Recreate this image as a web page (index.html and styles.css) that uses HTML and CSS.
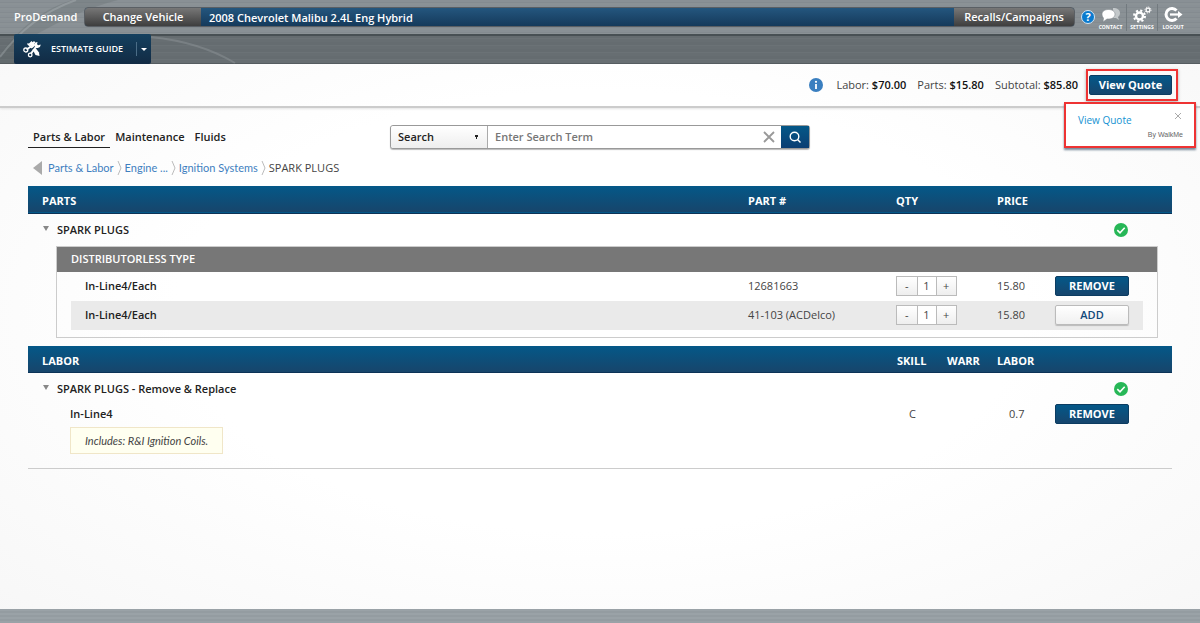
FILE: index.html
```
<!DOCTYPE html>
<html lang="en">
<head>
  <meta charset="UTF-8" />
  <meta name="viewport" content="width=device-width, initial-scale=1.0" />
  <title>ProDemand</title>
  <link rel="stylesheet" href="styles.css">
</head>
<body>
  <header class="top">
    <div class="top-row">
      <span class="brand">ProDemand</span>
      <div class="vehicle">
        <button class="vehicle-btn change">Change Vehicle</button>
        <span class="vehicle-name">2008 Chevrolet Malibu 2.4L Eng Hybrid</span>
        <button class="vehicle-btn recalls">Recalls/Campaigns</button>
      </div>
      <button class="help" aria-label="Help">?</button>
      <nav class="tools">
        <a href="#">
          <svg width="20" height="17" viewBox="0 0 20 17">
            <path d="M12 2c4.500 0 7 2 7 5 0 2-1 3-2 4l1 3-3-2h-3z" fill="#c3c8ca"/>
            <path d="M7.500 3.500c4 0 6.500 2 6.500 4.700s-2.500 4.800-6.500 4.800H6L2 16l.5-4C1.500 11 1 9.500 1 8.200c0-2.700 2.500-4.700 6.500-4.700z" fill="#fff" stroke="#7f878b" stroke-width=".6"/>
          </svg>
          <span>CONTACT</span>
        </a>
        <a href="#">
          <svg width="20" height="17" viewBox="0 0 20 17" fill="none" stroke="#fff">
            <circle cx="7.500" cy="10" r="3.500" stroke-width="2.400"/>
            <circle cx="7.500" cy="10" r="5.500" stroke-width="2" stroke-dasharray="2.160 2.160"/>
            <circle cx="16" cy="4" r="1.900" stroke-width="1.200"/>
            <circle cx="16" cy="4" r="3" stroke-width="1" stroke-dasharray="1.200 1.150"/>
          </svg>
          <span>SETTINGS</span>
        </a>
        <a href="#">
          <svg width="20" height="17" viewBox="0 0 20 17" fill="none" stroke="#fff">
            <path d="M13.500 4.500A6 6 0 1 0 13.500 12.500" stroke-width="3"/>
            <path d="M7 8.500H16" stroke-width="2.200"/>
            <path d="M15 5l4.500 3.500L15 12z" fill="#fff" stroke="none"/>
          </svg>
          <span>LOGOUT</span>
        </a>
      </nav>
    </div>
    <div class="tab-row">
      <button class="tab">
        <svg width="18" height="18" viewBox="0 0 18 18" fill="none" stroke="#fff">
          <path d="M5.500 4l3-3 1.200 1.200L11 1l1.500 1.500-1.200 1.200L12.500 5l-3 3z" fill="#fff" stroke="none"/>
          <path d="M4.500 3.500l4.500 4.500" stroke-width="1.400"/>
          <path d="M3.500 9.500L8 6.500" stroke-width="1.800"/>
          <circle cx="2.800" cy="10" r="2" stroke-width="1.300"/>
          <path d="M8 13.500l6-8" stroke-width="2"/>
          <circle cx="7.200" cy="15" r="1.800" stroke-width="1.300"/>
          <path d="M17.500 4.500a3 3 0 1 1-3-2.500L14 4.200l1.300 1z" fill="#fff" stroke="none"/>
          <path d="M9.500 9.500l3.500-1 3 4 .5 3.500-4-1z" fill="#fff" stroke="none"/>
        </svg>
        <span>ESTIMATE GUIDE</span>
        <i class="tab-caret"></i>
      </button>
    </div>
    <svg class="swoosh" width="320" height="64" viewBox="0 0 320 64" aria-hidden="true">
      <path d="M0 55Q28 14 72 0H118Q70 12 14 48V64H0Z" fill="#50585c" opacity=".2"/>
      <path d="M0 57Q30 16 76 0" fill="none" stroke="#c0c6c9" stroke-width="2" opacity=".3"/>
      <path d="M151 37Q200 42 235 63" fill="none" stroke="#a5abae" stroke-width="2" opacity=".3"/>
    </svg>
  </header>

  <section class="summary">
    <svg width="14" height="14" viewBox="0 0 14 14" role="img" aria-label="Info">
      <circle cx="7" cy="7" r="7" fill="#3a7fc0"/>
      <circle cx="7" cy="3.800" r="1.100" fill="#fff"/>
      <path d="M7 6v5" fill="none" stroke="#fff" stroke-width="1.800"/>
    </svg>
    <span>Labor: <b>$70.00</b></span>
    <span>Parts: <b>$15.80</b></span>
    <span>Subtotal: <b>$85.80</b></span>
    <div class="quote">
      <button class="btn quote-btn">View Quote</button>
      <div class="popup">
        <button class="popup-close" aria-label="Close">
          <svg width="6" height="6" viewBox="0 0 6 6" stroke="#aaa"><path d="M0 0l6 6M6 0L0 6"/></svg>
        </button>
        <a href="#">View Quote</a>
        <small>By WalkMe</small>
      </div>
    </div>
  </section>

  <main>
    <div class="nav-row">
      <nav class="tabs">
        <a href="#" class="active">Parts &amp; Labor</a>
        <a href="#">Maintenance</a>
        <a href="#">Fluids</a>
      </nav>
      <form class="search">
        <select aria-label="Search type"><option>Search</option></select>
        <input type="text" placeholder="Enter Search Term" aria-label="Search term">
        <button type="reset" class="clear" aria-label="Clear">
          <svg width="12" height="12" viewBox="0 0 12 12" stroke="#999" stroke-width="1.800"><path d="M1 1l10 10M11 1L1 11"/></svg>
        </button>
        <button type="button" class="go" aria-label="Search">
          <svg width="12" height="12" viewBox="0 0 12 12" fill="none" stroke="#fff" stroke-width="1.400"><circle cx="5.500" cy="5.500" r="4.300"/><path d="M8.500 8.500L11.500 11.500"/></svg>
        </button>
      </form>
    </div>

    <nav class="crumbs">
      <i class="back"></i>
      <a href="#">Parts &amp; Labor</a>
      <svg width="5" height="14" viewBox="0 0 5 14"><path d="M1 0l3 7-3 7"/></svg>
      <a href="#">Engine ...</a>
      <svg width="5" height="14" viewBox="0 0 5 14"><path d="M1 0l3 7-3 7"/></svg>
      <a href="#">Ignition Systems</a>
      <svg width="5" height="14" viewBox="0 0 5 14"><path d="M1 0l3 7-3 7"/></svg>
      <span>SPARK PLUGS</span>
    </nav>

    <table class="section">
      <colgroup><col><col class="w-part"><col class="w-qty"><col class="w-price"><col class="w-end"></colgroup>
      <thead>
        <tr><th>PARTS</th><th>PART #</th><th>QTY</th><th>PRICE</th><th></th></tr>
      </thead>
      <tbody>
        <tr>
          <td colspan="5">
            <div class="group">
              <i class="arrow"></i>
              <h2>SPARK PLUGS</h2>
              <svg width="14" height="14" viewBox="0 0 14 14" role="img" aria-label="Added">
                <circle cx="7" cy="7" r="7" fill="#27b757"/>
                <path d="M3.300 7.200l2.700 2.600 4.700-5" fill="none" stroke="#fff" stroke-width="1.600"/>
              </svg>
            </div>
            <div class="box">
              <h3>DISTRIBUTORLESS TYPE</h3>
              <table class="items">
                <colgroup><col><col class="w-part"><col class="w-qty"><col class="w-price"><col class="w-action"></colgroup>
                <tr>
                  <th scope="row">In-Line4/Each</th>
                  <td>12681663</td>
                  <td>
                    <div class="stepper">
                      <button aria-label="Less">-</button><input type="text" value="1" aria-label="Quantity"><button aria-label="More">+</button>
                    </div>
                  </td>
                  <td>15.80</td>
                  <td><button class="btn">REMOVE</button></td>
                </tr>
                <tr>
                  <th scope="row">In-Line4/Each</th>
                  <td>41-103 (ACDelco)</td>
                  <td>
                    <div class="stepper">
                      <button aria-label="Less">-</button><input type="text" value="1" aria-label="Quantity"><button aria-label="More">+</button>
                    </div>
                  </td>
                  <td>15.80</td>
                  <td><button class="btn light">ADD</button></td>
                </tr>
              </table>
            </div>
          </td>
        </tr>
      </tbody>
    </table>

    <table class="section labor">
      <colgroup><col><col class="w-skill"><col class="w-skill"><col class="w-price"><col class="w-end"></colgroup>
      <thead>
        <tr><th>LABOR</th><th>SKILL</th><th>WARR</th><th>LABOR</th><th></th></tr>
      </thead>
      <tbody>
        <tr>
          <td colspan="5">
            <div class="group">
              <i class="arrow"></i>
              <h2>SPARK PLUGS - Remove &amp; Replace</h2>
              <svg width="14" height="14" viewBox="0 0 14 14" role="img" aria-label="Added">
                <circle cx="7" cy="7" r="7" fill="#27b757"/>
                <path d="M3.300 7.200l2.700 2.600 4.700-5" fill="none" stroke="#fff" stroke-width="1.600"/>
              </svg>
            </div>
          </td>
        </tr>
        <tr class="labor-row">
          <th scope="row">In-Line4</th>
          <td class="skill">C</td>
          <td></td>
          <td class="hours">0.7</td>
          <td><button class="btn">REMOVE</button></td>
        </tr>
        <tr>
          <td colspan="5"><p class="note">Includes: R&amp;I Ignition Coils.</p></td>
        </tr>
      </tbody>
    </table>
  </main>

  <footer></footer>
</body>
</html>
```
FILE: styles.css
```
* {
  box-sizing: border-box;
}
body {
  margin: 0;
  min-height: 100vh;
  display: flex;
  flex-direction: column;
  font-family: "Open Sans", "Noto Sans", sans-serif;
  font-size: 11px;
  line-height: 14px;
  color: #444;
  background: radial-gradient(ellipse at center, #fff 50%, #f7f7f7 100%);
}
button, input, select {
  font: inherit;
  margin: 0;
  padding: 0;
  border: 0;
  color: inherit;
}
button {
  cursor: pointer;
}
a {
  text-decoration: none;
  color: #3f7fbf;
}

/* header */
.top {
  position: relative;
  background: repeating-linear-gradient(#656c70 0 3px, #6b7276 3px 4px, #676e72 4px 7px);
  color: #fff;
}
.swoosh {
  position: absolute;
  left: 0;
  top: 0;
  pointer-events: none;
}
.top-row {
  display: flex;
  align-items: center;
  height: 34px;
  padding: 0 12px 0 14px;
  background: repeating-linear-gradient(#899095 0 2px, #848b90 2px 3px, #8b9296 3px 5px);
}
.brand {
  position: relative;
  z-index: 1;
  width: 70px;
  font-weight: 600;
}
.vehicle {
  position: relative;
  z-index: 1;
  flex: 1;
  display: flex;
  height: 20px;
  border: 1px solid #5a5f64;
  border-radius: 4px;
  overflow: hidden;
  background: linear-gradient(#24567e, #153a5b);
}
.vehicle-btn {
  color: #fff;
  font-weight: 600;
  line-height: 16px;
  background: linear-gradient(#777, #3e3e3e);
}
.change {
  width: 116px;
}
.vehicle-name {
  flex: 1;
  padding-left: 8px;
  line-height: 19px;
  font-weight: 600;
}
.recalls {
  width: 120px;
}
.help {
  width: 14px;
  height: 14px;
  margin-left: 6px;
  border: 1px solid #d2e6f5;
  border-radius: 50%;
  background: #0a7ace;
  color: #fff;
  font-weight: 700;
  line-height: 12px;
}
.tools {
  display: flex;
}
.tools a {
  display: flex;
  flex-direction: column;
  align-items: center;
  width: 31px;
  height: 27px;
  padding-top: 2px;
  color: #fff;
  font-size: 5px;
  font-weight: 700;
  line-height: 8px;
}
.tools a + a {
  border-left: 1px solid #727a7f;
}
.tab-row {
  height: 30px;
  padding-left: 14px;
  border-top: 2px solid #485054;
  border-bottom: 1px solid #555c60;
}
.tab {
  position: relative;
  z-index: 1;
  display: flex;
  align-items: center;
  width: 137px;
  height: 30px;
  margin-top: -2px;
  padding-left: 9px;
  border-radius: 2px;
  background: linear-gradient(#15405f, #122b44);
  color: #fff;
  font-size: 9px;
  font-weight: 600;
}
.tab span {
  flex: 1;
  padding-left: 10px;
  text-align: left;
}
.tab-caret {
  height: 14px;
  padding: 6px 4px 0;
  border-left: 1px solid #4b6d87;
}
.tab-caret::after {
  content: "";
  display: block;
  border: 3px solid transparent;
  border-top-color: #fff;
}

/* totals */
.summary {
  display: flex;
  align-items: center;
  justify-content: flex-end;
  gap: 11px;
  height: 44px;
  padding-right: 22px;
  border-bottom: 2px solid #ccc;
  box-shadow: 0 1px 2px #e4e4e4;
}
.summary svg {
  margin-right: 2px;
}
.summary b {
  color: #111;
  font-weight: 600;
}
.btn {
  display: block;
  width: 74px;
  height: 20px;
  border: 1px solid #0c3c61;
  border-radius: 2px;
  background: linear-gradient(#045888, #16456d);
  color: #fff;
  font-weight: 700;
  line-height: 16px;
}
.light {
  border-color: #bbb;
  background: linear-gradient(#fff, #f0f0f0);
  box-shadow: 0 1px 1px #bbb;
  color: #11497a;
  font-weight: 600;
}
.quote {
  position: relative;
  margin-left: -3px;
  padding: 4px 4px 4px 1px;
  border: 2px solid #e33;
  box-shadow: 0 1px 3px #aaa;
}
.quote-btn {
  width: 83px;
}
.popup {
  position: absolute;
  right: -20px;
  top: 31px;
  width: 132px;
  height: 46px;
  padding: 9px 11px 0 12px;
  border: 2px solid #e33;
  background: #fff;
  box-shadow: 0 2px 2px #789;
}
.popup a {
  display: block;
  color: #1492d2;
  font-size: 10px;
}
.popup small {
  display: block;
  color: #666;
  font: 7px/16px "Liberation Sans", Arial, sans-serif;
  text-align: right;
}
.popup-close {
  float: right;
  width: 10px;
  height: 6px;
  line-height: 0;
  background: none;
}
.popup-close svg {
  margin: 0;
}

/* content */
main {
  flex: 1;
  padding: 17px 28px 0;
}
.nav-row {
  display: grid;
  grid-template-columns: 362px 420px;
  align-items: center;
}
.tabs {
  display: flex;
}
.tabs a {
  padding: 4px 5px 3px;
  border-bottom: 1px solid transparent;
  color: #222;
  font-weight: 600;
}
.tabs .active {
  border-color: #222;
}
.search {
  display: flex;
  height: 24px;
  border: 1px solid #999;
  border-radius: 3px;
  background: #fff;
  box-shadow: 0 1px 1px #bbb;
}
.search select {
  appearance: none;
  width: 97px;
  padding-left: 7px;
  border-right: 1px solid #aaa;
  border-radius: 3px 0 0 3px;
  background-image: conic-gradient(from -27deg at 50% 100%, #222 54deg, transparent 0), linear-gradient(#fff, #eee);
  background-size: 5px 4px, auto;
  background-position: 83px 9px, 0 0;
  background-repeat: no-repeat;
  color: #222;
  font-weight: 600;
}
.search input {
  flex: 1;
  min-width: 0;
  padding-left: 7px;
  background: none;
  font-weight: 600;
}
.search input::placeholder {
  color: #777;
}
.clear {
  width: 24px;
  line-height: 0;
  background: none;
}
.go {
  width: 28px;
  line-height: 0;
  background: linear-gradient(#045888, #0b3e73);
}
.crumbs {
  display: flex;
  align-items: center;
  gap: 3px;
  height: 37px;
  padding-left: 5px;
}
.crumbs a {
  font-family: Lato, "Open Sans", sans-serif;
}
.crumbs svg {
  fill: none;
  stroke: #bbb;
}
.back {
  border: 7px solid transparent;
  border-right: 9px solid #aaa;
  border-left: 0;
  margin-right: 3px;
}

table {
  width: 100%;
  border-collapse: collapse;
  table-layout: fixed;
}
th, td {
  padding: 0;
  text-align: left;
}
.w-part {
  width: 148px;
}
.w-qty {
  width: 101px;
}
.w-price {
  width: 58px;
}
.w-end {
  width: 117px;
}
.w-action {
  width: 88px;
}
.w-skill {
  width: 50px;
}
.section thead tr {
  height: 27px;
  background: linear-gradient(#045888, #17456b);
  border-bottom: 1px solid #0c3357;
  color: #fff;
}
.section thead th {
  padding-top: 4px;
}
.section thead th:first-child {
  padding-left: 14px;
}
.group {
  display: flex;
  align-items: center;
  height: 32px;
  padding: 0 44px 0 15px;
}
.arrow {
  border: 3px solid transparent;
  border-top: 5px solid #888;
}
h2, h3 {
  margin: 0;
  font-size: 11px;
  font-weight: 600;
  line-height: 14px;
}
h2 {
  flex: 1;
  padding-left: 8px;
  color: #222;
}
.box {
  margin: 0 14px 8px 28px;
  padding-bottom: 7px;
  border: 1px solid #ccc;
}
h3 {
  padding: 5px 14px 6px;
  background: #777;
  color: #fff;
}
.items {
  width: calc(100% - 28px);
  margin: 0 14px;
}
.items tr {
  height: 29px;
}
.items tr:nth-child(2) {
  background: #eaeaea;
}
.items th {
  padding-left: 14px;
  color: #222;
  font-weight: 600;
}
.stepper {
  display: flex;
  width: 61px;
  height: 20px;
  border: 1px solid #bbb;
}
.stepper button {
  flex: 1;
  background: linear-gradient(#fff, #eee);
}
.stepper input {
  width: 20px;
  border: solid #bbb;
  border-width: 0 1px;
  background: #fff;
  text-align: center;
}
.labor {
  border-bottom: 1px solid #ccc;
}
.labor .group {
  height: 31px;
}
.labor-row th {
  padding-left: 42px;
  color: #222;
  font-weight: 600;
}
.skill, .hours {
  padding-left: 12px;
}
.note {
  width: fit-content;
  margin: 3px 0 14px 42px;
  padding: 6px 14px 5px;
  border: 1px solid #f0e6c8;
  background: #fffff0;
  font-family: Lato, "Open Sans", sans-serif;
  font-style: italic;
}
footer {
  height: 14px;
  background: repeating-linear-gradient(#9aa2a7 0 2px, #949ca1 2px 4px);
}
```
